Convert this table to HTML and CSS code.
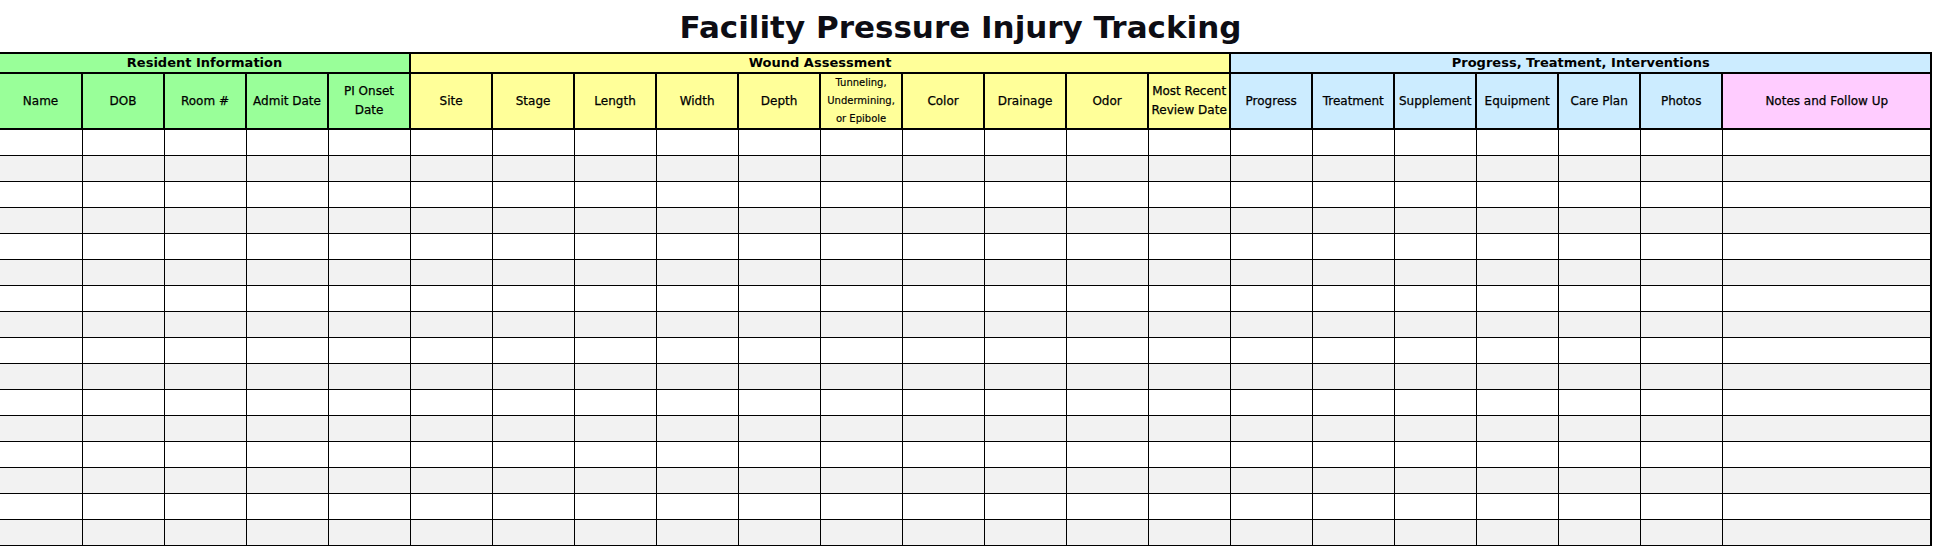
FILE: index.html
```html
<!DOCTYPE html>
<html>
<head>
<meta charset="utf-8">
<title>Facility Pressure Injury Tracking</title>
<link rel="stylesheet" href="styles.css">
</head>
<body>
<div class="title">Facility Pressure Injury Tracking</div>
<table class="sheet">
  <colgroup>
    <col class="col-first">
    <col class="col"><col class="col"><col class="col"><col class="col">
    <col class="col"><col class="col"><col class="col"><col class="col"><col class="col">
    <col class="col"><col class="col"><col class="col"><col class="col"><col class="col">
    <col class="col"><col class="col"><col class="col"><col class="col"><col class="col">
    <col class="col">
    <col class="col-notes">
  </colgroup>
  <thead>
    <tr class="groups">
      <th colspan="5" class="green">Resident Information</th>
      <th colspan="10" class="yellow">Wound Assessment</th>
      <th colspan="7" class="blue last">Progress, Treatment, Interventions</th>
    </tr>
    <tr class="labels">
      <th class="green">Name</th>
      <th class="green">DOB</th>
      <th class="green">Room #</th>
      <th class="green">Admit Date</th>
      <th class="green">PI Onset<br>Date</th>
      <th class="yellow">Site</th>
      <th class="yellow">Stage</th>
      <th class="yellow">Length</th>
      <th class="yellow">Width</th>
      <th class="yellow">Depth</th>
      <th class="yellow small">Tunneling,<br>Undermining,<br>or Epibole</th>
      <th class="yellow">Color</th>
      <th class="yellow">Drainage</th>
      <th class="yellow">Odor</th>
      <th class="yellow">Most Recent<br>Review Date</th>
      <th class="blue">Progress</th>
      <th class="blue">Treatment</th>
      <th class="blue">Supplement</th>
      <th class="blue">Equipment</th>
      <th class="blue">Care Plan</th>
      <th class="blue">Photos</th>
      <th class="pink last">Notes and Follow Up</th>
    </tr>
  </thead>
  <tbody>
    <tr><td></td><td></td><td></td><td></td><td></td><td></td><td></td><td></td><td></td><td></td><td></td><td></td><td></td><td></td><td></td><td></td><td></td><td></td><td></td><td></td><td></td><td class="last"></td></tr>
    <tr><td></td><td></td><td></td><td></td><td></td><td></td><td></td><td></td><td></td><td></td><td></td><td></td><td></td><td></td><td></td><td></td><td></td><td></td><td></td><td></td><td></td><td class="last"></td></tr>
    <tr><td></td><td></td><td></td><td></td><td></td><td></td><td></td><td></td><td></td><td></td><td></td><td></td><td></td><td></td><td></td><td></td><td></td><td></td><td></td><td></td><td></td><td class="last"></td></tr>
    <tr><td></td><td></td><td></td><td></td><td></td><td></td><td></td><td></td><td></td><td></td><td></td><td></td><td></td><td></td><td></td><td></td><td></td><td></td><td></td><td></td><td></td><td class="last"></td></tr>
    <tr><td></td><td></td><td></td><td></td><td></td><td></td><td></td><td></td><td></td><td></td><td></td><td></td><td></td><td></td><td></td><td></td><td></td><td></td><td></td><td></td><td></td><td class="last"></td></tr>
    <tr><td></td><td></td><td></td><td></td><td></td><td></td><td></td><td></td><td></td><td></td><td></td><td></td><td></td><td></td><td></td><td></td><td></td><td></td><td></td><td></td><td></td><td class="last"></td></tr>
    <tr><td></td><td></td><td></td><td></td><td></td><td></td><td></td><td></td><td></td><td></td><td></td><td></td><td></td><td></td><td></td><td></td><td></td><td></td><td></td><td></td><td></td><td class="last"></td></tr>
    <tr><td></td><td></td><td></td><td></td><td></td><td></td><td></td><td></td><td></td><td></td><td></td><td></td><td></td><td></td><td></td><td></td><td></td><td></td><td></td><td></td><td></td><td class="last"></td></tr>
    <tr><td></td><td></td><td></td><td></td><td></td><td></td><td></td><td></td><td></td><td></td><td></td><td></td><td></td><td></td><td></td><td></td><td></td><td></td><td></td><td></td><td></td><td class="last"></td></tr>
    <tr><td></td><td></td><td></td><td></td><td></td><td></td><td></td><td></td><td></td><td></td><td></td><td></td><td></td><td></td><td></td><td></td><td></td><td></td><td></td><td></td><td></td><td class="last"></td></tr>
    <tr><td></td><td></td><td></td><td></td><td></td><td></td><td></td><td></td><td></td><td></td><td></td><td></td><td></td><td></td><td></td><td></td><td></td><td></td><td></td><td></td><td></td><td class="last"></td></tr>
    <tr><td></td><td></td><td></td><td></td><td></td><td></td><td></td><td></td><td></td><td></td><td></td><td></td><td></td><td></td><td></td><td></td><td></td><td></td><td></td><td></td><td></td><td class="last"></td></tr>
    <tr><td></td><td></td><td></td><td></td><td></td><td></td><td></td><td></td><td></td><td></td><td></td><td></td><td></td><td></td><td></td><td></td><td></td><td></td><td></td><td></td><td></td><td class="last"></td></tr>
    <tr><td></td><td></td><td></td><td></td><td></td><td></td><td></td><td></td><td></td><td></td><td></td><td></td><td></td><td></td><td></td><td></td><td></td><td></td><td></td><td></td><td></td><td class="last"></td></tr>
    <tr><td></td><td></td><td></td><td></td><td></td><td></td><td></td><td></td><td></td><td></td><td></td><td></td><td></td><td></td><td></td><td></td><td></td><td></td><td></td><td></td><td></td><td class="last"></td></tr>
    <tr><td></td><td></td><td></td><td></td><td></td><td></td><td></td><td></td><td></td><td></td><td></td><td></td><td></td><td></td><td></td><td></td><td></td><td></td><td></td><td></td><td></td><td class="last"></td></tr>
  </tbody>
</table>
</body>
</html>
```

FILE: styles.css
```css
html, body {
  margin: 0;
  padding: 0;
  background: #ffffff;
}

body {
  font-family: "DejaVu Sans", "Liberation Sans", sans-serif;
  color: #000000;
  overflow: hidden;
}

.title {
  box-sizing: border-box;
  height: 52px;
  padding-top: 9px;
  padding-right: 12px;
  line-height: 36px;
  font-size: 31px;
  font-weight: bold;
  text-align: center;
  color: #0d0d14;
  white-space: nowrap;
}

.sheet {
  border-collapse: separate;
  border-spacing: 0;
  table-layout: fixed;
  width: 1932px;
}

.col-first { width: 83px; }
.col { width: 82px; }
.col-notes { width: 209px; }

.sheet th {
  padding: 0;
  font-weight: normal;
  text-align: center;
  vertical-align: middle;
  border-right: 2px solid #000;
  border-bottom: 2px solid #000;
  white-space: nowrap;
  overflow: hidden;
  color: #000;
}

.groups { height: 22px; }
.groups th {
  border-top: 2px solid #000;
  font-size: 13px;
  font-weight: bold;
  line-height: 16px;
}

.labels { height: 56px; }
.labels th {
  font-size: 12px;
  line-height: 19px;
  -webkit-text-stroke: 0.25px #000;
}
.labels th.small {
  font-size: 10px;
  line-height: 18px;
  -webkit-text-stroke: 0.15px #000;
}

.green { background: #99ff99; }
.yellow { background: #ffff99; }
.blue { background: #ccecff; }
.pink { background: #ffccff; }

.sheet tbody tr { height: 26px; }
.sheet tbody tr:nth-child(even) td { background: #f2f2f2; }

.sheet td {
  padding: 0;
  border-right: 1px solid #000;
  border-bottom: 1px solid #000;
}
.sheet td.last { border-right-width: 2px; }
```
